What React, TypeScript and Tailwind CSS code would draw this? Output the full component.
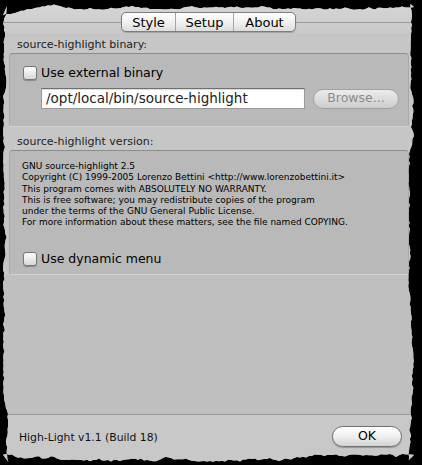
import React from 'react';

const FONT = { fontFamily: '"DejaVu Sans", "Liberation Sans", sans-serif' };

// torn-paper outline of the screenshot, computed once
function tornClip(w: number, h: number) {
  let seed = 11;
  const rnd = () => {
    seed = (seed * 16807) % 2147483647;
    return seed / 2147483647;
  };
  const pts: Array<[number, number]> = [];
  let walk = 2;
  const step = () => {
    walk = Math.max(0, Math.min(5, walk + (rnd() - 0.5) * 2.4));
    return walk + rnd() * 0.8;
  };
  for (let x = 0; x <= w; x += 3) pts.push([x, step() + (x < 50 ? (50 - x) / 5 : 0)]);
  for (let y = 0; y <= h; y += 3) pts.push([w - step(), y]);
  for (let x = w; x >= 0; x -= 3) pts.push([x, h - step() * 1.4]);
  for (let y = h; y >= 0; y -= 3) pts.push([step(), y]);
  return `polygon(${pts.map(([x, y]) => `${x.toFixed(1)}px ${y.toFixed(1)}px`).join(',')})`;
}

function Checkbox() {
  return (
    <span className="block h-[14px] w-[14px] shrink-0 rounded-[3px] border border-[#777] bg-linear-to-b from-white to-[#d8d8d8] shadow-[0_1px_1px_rgba(0,0,0,0.25)]" />
  );
}

const TABS = ['Style', 'Setup', 'About'];

export default function App() {
  const clip = tornClip(411, 458);

  return (
    <div className="h-[465px] w-[422px] bg-black pl-[3px] pt-[4px]" style={FONT}>
      <div className="flex h-[458px] w-[411px] flex-col bg-[#c4c4c4]" style={{ clipPath: clip }}>
        {/* toolbar with segmented tabs */}
        <div className="h-[29px] bg-linear-to-b from-[#d6d6d6] to-[#c9c9c9] pt-[8px]">
          <div className="flex h-[20px] items-center">
            <div className="h-px flex-1 bg-[#9a9a9a]" />
            <div className="flex h-[20px] overflow-hidden rounded-[5px] border border-[#7d7d7d] bg-linear-to-b from-white via-[#f2f2f2] to-[#dcdcdc] shadow-[0_1px_1px_rgba(0,0,0,0.2)]">
              {TABS.map((tab, i) => (
                <div
                  key={tab}
                  className={`flex items-center justify-center text-[13px] leading-none text-black ${
                    i === 0 ? 'w-[53px]' : i === 1 ? 'w-[58px] border-l border-[#a5a5a5]' : 'w-[62px] border-l border-[#a5a5a5]'
                  }`}
                >
                  {tab}
                </div>
              ))}
            </div>
            <div className="h-px flex-1 bg-[#9a9a9a]" />
          </div>
        </div>

        <div className="bg-[#c6c6c6] pl-[6px] pr-[5px]">
          <div className="flex h-[20px] items-end pb-[2px] pl-[8px] text-[11px] leading-[13px] text-[#222]">
            source-highlight binary:
          </div>

          <div className="h-[74px] rounded-[4px] border border-[#a9a9a9] border-b-[#d2d2d2] border-t-[#8c8c8c] bg-[#b9b9b9] pl-[13px] pt-[11px]">
            <div className="flex items-center gap-[4px]">
              <Checkbox />
              <span className="text-[12.5px] leading-[16px] text-black">Use external binary</span>
            </div>
            <div className="mt-[7px] flex items-center pl-[18px]">
              <div className="flex h-[21px] w-[264px] items-center border border-[#9a9a9a] border-t-[#6f6f6f] bg-white pl-[4px] text-[13.5px] text-[#222] shadow-[inset_0_1px_1px_rgba(0,0,0,0.15)]">
                /opt/local/bin/source-highlight
              </div>
              <div className="ml-[8px] flex h-[20px] w-[86px] items-center justify-center rounded-full border border-[#a0a0a0] bg-linear-to-b from-[#ececec] to-[#cdcdcd] text-[12.5px] text-[#8a8a8a]">
                Browse...
              </div>
            </div>
          </div>

          <div className="flex h-[23px] items-end pb-[2px] pl-[8px] text-[11px] leading-[13px] text-[#222]">
            source-highlight version:
          </div>

          <div className="h-[125px] rounded-t-[4px] border border-[#a9a9a9] border-b-[#d2d2d2] border-t-[#8c8c8c] bg-[#b9b9b9] pl-[12px] pt-[10px]">
            <div className="text-[9px] leading-[11.3px] text-black">
              <div>GNU source-highlight 2.5</div>
              <div>Copyright (C) 1999-2005 Lorenzo Bettini &lt;http://www.lorenzobettini.it&gt;</div>
              <div>This program comes with ABSOLUTELY NO WARRANTY.</div>
              <div>This is free software; you may redistribute copies of the program</div>
              <div>under the terms of the GNU General Public License.</div>
              <div>For more information about these matters, see the file named COPYING.</div>
            </div>
            <div className="mt-[22px] flex items-center gap-[4px] pl-[1px]">
              <Checkbox />
              <span className="text-[12.5px] leading-[16px] text-black">Use dynamic menu</span>
            </div>
          </div>
        </div>

        <div className="flex-1 bg-[#bfbfbf]" />

        <div className="flex h-[48px] items-start justify-between border-t border-[#999] bg-[#c8c8c8] pl-[16px] pr-[12px] pt-[11px]">
          <span className="pt-[5px] text-[10.8px] leading-[13px] text-[#111]">High-Light v1.1 (Build 18)</span>
          <div className="flex h-[21px] w-[70px] items-center justify-center rounded-full border border-[#707070] bg-linear-to-b from-white via-[#f0f0f0] to-[#d2d2d2] text-[12.5px] text-black shadow-[0_1px_1px_rgba(0,0,0,0.25)]">
            OK
          </div>
        </div>
      </div>
    </div>
  );
}
